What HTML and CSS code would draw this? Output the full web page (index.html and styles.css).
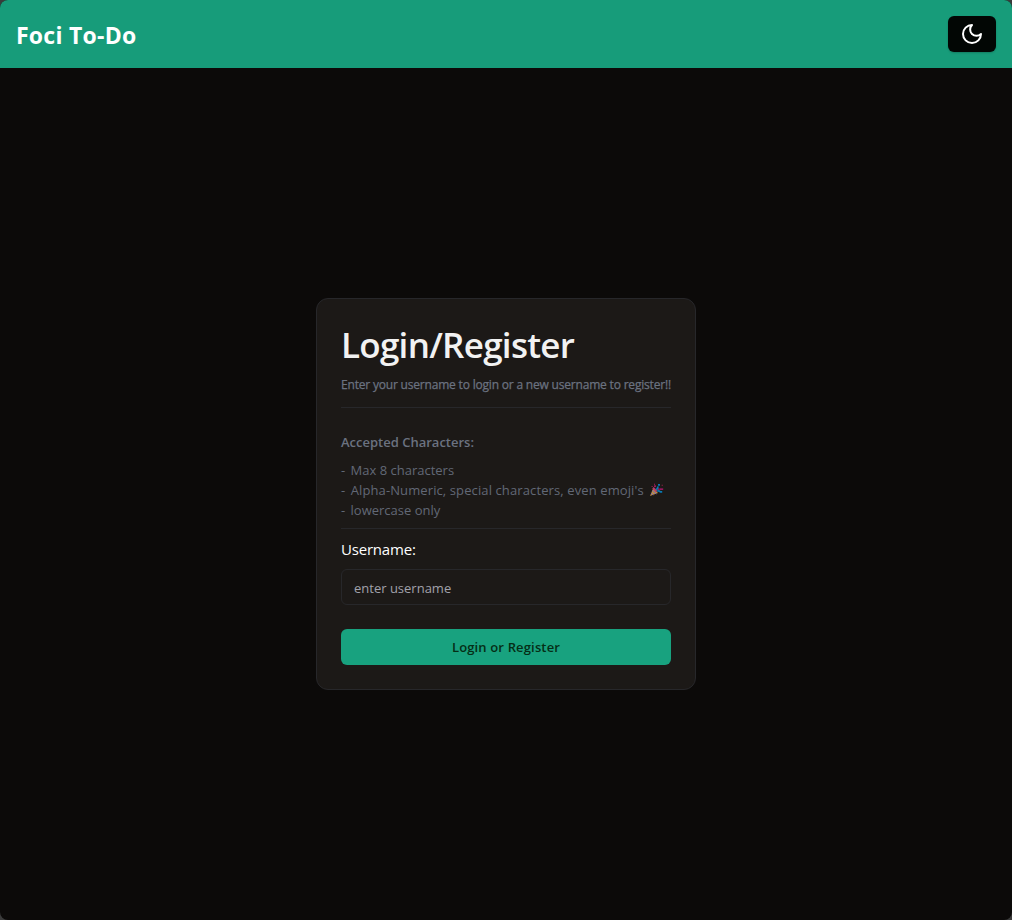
FILE: index.html
```html
<!DOCTYPE html>
<html lang="en">
<head>
<meta charset="utf-8">
<title>Foci To-Do</title>
<link rel="stylesheet" href="styles.css">
</head>
<body>
<div class="window">
  <header class="topbar">
    <h2 class="brand"><span>Foci To-Do</span></h2>
    <button class="theme-toggle" type="button" aria-label="Toggle theme">
      <svg width="24" height="24" viewBox="0 0 24 24" fill="none" stroke="currentColor" stroke-width="2" stroke-linecap="round" stroke-linejoin="round"><path d="M12 3a6 6 0 0 0 9 9 9 9 0 1 1-9-9Z"/></svg>
    </button>
  </header>
  <main class="page">
    <form class="card">
      <h1 class="title"><span>Login/Register</span></h1>
      <p class="subtitle"><span>Enter your username to login or a new username to register!!</span></p>
      <div class="rules">
        <h3 class="rules-title"><span>Accepted Characters:</span></h3>
        <p class="rule"><span class="rule-text">- Max 8 characters</span></p>
        <p class="rule"><span class="rule-text rule-long">- Alpha-Numeric, special characters, even emoji's</span>
          <svg class="popper" width="15" height="14" viewBox="0 0 15 14"><path d="M1 13 4.200 5.200 9 10Z" fill="#b98c48"/><path d="m3.300 7.500 3.900 3.600M2.200 10.200l2 1.800" stroke="#7867b5" stroke-width="1"/><path d="M4 4.800 7.500 8.500" stroke="#b83c6c" stroke-width="2"/><path d="M8.500 6.200h2.200M11 6.200h3.200M5 3.200h2" fill="none" stroke="#c11679" stroke-width="1.300"/><path d="M7 6.500c2-.8 2-2 1.800-3.200M9 1.800h2M8.200 8.300c1.500-1 2.200-.3 3.200.6h1.800" fill="none" stroke="#087ab5" stroke-width="1.700"/><path d="M5 .8h1v1H5zM12.700 1.800h1v1h-1zM2.600 3h1v1h-1z" fill="#a8234f"/></svg></p>
        <p class="rule"><span class="rule-text">- lowercase only</span></p>
      </div>
      <label class="label" for="username"><span>Username:</span></label>
      <input class="field" id="username" type="text" placeholder="enter username">
      <button class="submit" type="button"><span>Login or Register</span></button>
    </form>
  </main>
</div>
</body>
</html>
```
FILE: styles.css
```css
* { box-sizing: border-box; margin: 0; padding: 0; }
html { background: #3b3b3b; }
body { font-family: "Open Sans", "Noto Sans", sans-serif; background: #3b3b3b; }
.window { height: 920px; display: flex; flex-direction: column; background: #0c0a09; border-radius: 8px; overflow: hidden; }
.topbar { height: 68px; flex: none; padding: 0 16px; display: flex; align-items: center; justify-content: space-between; background: #179c7a; }
.brand { color: #fff; font-size: 23px; letter-spacing: .25px; font-weight: 700; line-height: 32px; padding-top: 2px; white-space: nowrap; }
.theme-toggle { width: 48px; height: 36px; border: 0; border-radius: 6px; background: #020604; color: #fff; display: flex; align-items: center; justify-content: center; box-shadow: 0 1px 2px rgba(0,0,0,.2); }
.page { flex: 1; display: flex; align-items: center; justify-content: center; }
.card { width: 380px; height: 392px; padding: 23px 24px; border: 1px solid #27272a; border-radius: 12px; background: #1c1917; white-space: nowrap; display: flex; flex-direction: column; }
.title { height: 48px; line-height: 46px; color: #f2f2f2; font-size: 35px; letter-spacing: -.72px; font-weight: 600; }
.subtitle { height: 38px; padding-top: 5px; line-height: 20px; color: #6b7280; font-size: 12px; letter-spacing: -.19px; font-weight: 500; -webkit-text-stroke: .25px #6b7280; border-bottom: 1px solid #27272a; }
.rules { height: 121px; padding-top: 24px; border-bottom: 1px solid #27272a; color: #6b7280; }
.rules-title { font-size: 13px; font-weight: 600; line-height: 20px; margin-bottom: 8px; }
.rule { height: 20px; line-height: 20px; font-size: 13px; font-weight: 400; color: #626876; display: flex; align-items: center; }
.rule-text { display: block; }
.rule-text::first-letter { letter-spacing: 2px; }
.rule-long { letter-spacing: .11px; }
.popper { margin-left: 5px; flex: none; }
.label { height: 40px; line-height: 24px; padding-top: 8px; color: #fff; font-size: 15px; letter-spacing: -.2px; }
.field { height: 36px; width: 330px; padding: 2px 12px 0; border: 1px solid #27272a; border-radius: 6px; background: transparent; color: #fff; font: 400 13px "Open Sans", "Noto Sans", sans-serif; outline: 0; }
.field::placeholder { color: #a1a1aa; opacity: 1; }
.submit { height: 36px; width: 330px; margin-top: 24px; border: 0; border-radius: 6px; background: #18a27f; color: #052e16; font: 600 13px "Open Sans", "Noto Sans", sans-serif; letter-spacing: .15px; }
```
